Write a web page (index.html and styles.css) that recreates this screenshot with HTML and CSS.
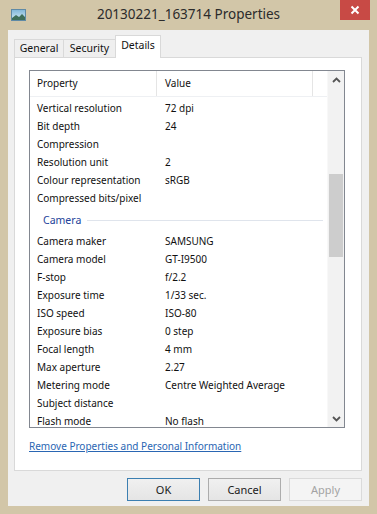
FILE: index.html
```html
<!DOCTYPE html>
<html lang="en">
<head>
    <meta charset="UTF-8">
    <title>20130221_163714 Properties</title>
    <link rel="stylesheet" href="styles.css">
</head>
<body>

<div class="window">
    <div class="titlebar">
        <svg class="titlebar__icon" width="15" height="12" viewBox="0 0 15 12">
            <defs>
                <linearGradient id="sky" x1="0" y1="0" x2="0" y2="1">
                    <stop offset="0" stop-color="#7fb6d8"/>
                    <stop offset="1" stop-color="#d7ecf6"/>
                </linearGradient>
            </defs>
            <rect x="0.5" y="0.5" width="14" height="11" fill="url(#sky)" stroke="#5f8aa6"/>
            <path d="M1 9 L5 6 L8 8 L11 5 L14 8 L14 11 L1 11 Z" fill="#3f6f5a"/>
        </svg>
        <div class="titlebar__text">20130221_163714 Properties</div>
        <div class="titlebar__close">
            <svg width="10" height="10" viewBox="0 0 10 10"><path d="M1.5 1.5 L8.5 8.5 M8.5 1.5 L1.5 8.5" stroke="#fff" stroke-width="2"/></svg>
        </div>
    </div>

    <div class="client">
        <div class="tabs">
            <div class="tab tab--general">General</div>
            <div class="tab tab--security">Security</div>
            <div class="tab tab--active">Details</div>
        </div>

        <div class="panel">
            <div class="list">
                <div class="list__main">
                    <div class="list__head">
                        <div class="cell cell--prop">Property</div>
                        <div class="cell cell--value">Value</div>
                        <div class="cell cell--rest"></div>
                    </div>
                    <div class="list__body">
                        <div class="row"><div class="cell cell--prop">Vertical resolution</div><div class="cell cell--value">72 dpi</div></div>
                        <div class="row"><div class="cell cell--prop">Bit depth</div><div class="cell cell--value">24</div></div>
                        <div class="row"><div class="cell cell--prop">Compression</div><div class="cell cell--value"></div></div>
                        <div class="row"><div class="cell cell--prop">Resolution unit</div><div class="cell cell--value">2</div></div>
                        <div class="row"><div class="cell cell--prop">Colour representation</div><div class="cell cell--value">sRGB</div></div>
                        <div class="row"><div class="cell cell--prop">Compressed bits/pixel</div><div class="cell cell--value"></div></div>
                        <div class="group"><span class="group__name">Camera</span><span class="group__line"></span></div>
                        <div class="row"><div class="cell cell--prop">Camera maker</div><div class="cell cell--value">SAMSUNG</div></div>
                        <div class="row"><div class="cell cell--prop">Camera model</div><div class="cell cell--value">GT-I9500</div></div>
                        <div class="row"><div class="cell cell--prop">F-stop</div><div class="cell cell--value">f/2.2</div></div>
                        <div class="row"><div class="cell cell--prop">Exposure time</div><div class="cell cell--value">1/33 sec.</div></div>
                        <div class="row"><div class="cell cell--prop">ISO speed</div><div class="cell cell--value">ISO-80</div></div>
                        <div class="row"><div class="cell cell--prop">Exposure bias</div><div class="cell cell--value">0 step</div></div>
                        <div class="row"><div class="cell cell--prop">Focal length</div><div class="cell cell--value">4 mm</div></div>
                        <div class="row"><div class="cell cell--prop">Max aperture</div><div class="cell cell--value">2.27</div></div>
                        <div class="row"><div class="cell cell--prop">Metering mode</div><div class="cell cell--value">Centre Weighted Average</div></div>
                        <div class="row"><div class="cell cell--prop">Subject distance</div><div class="cell cell--value"></div></div>
                        <div class="row"><div class="cell cell--prop">Flash mode</div><div class="cell cell--value">No flash</div></div>
                    </div>
                </div>
                <div class="scrollbar">
                    <div class="scrollbar__btn">
                        <svg width="9" height="6" viewBox="0 0 9 6"><polyline points="1,5 4.5,1.5 8,5" fill="none" stroke="#555" stroke-width="1.8"/></svg>
                    </div>
                    <div class="scrollbar__track"><div class="scrollbar__thumb"></div></div>
                    <div class="scrollbar__btn">
                        <svg width="9" height="6" viewBox="0 0 9 6"><polyline points="1,1 4.5,4.5 8,1" fill="none" stroke="#555" stroke-width="1.8"/></svg>
                    </div>
                </div>
            </div>
            <a class="remove-link" href="#">Remove Properties and Personal Information</a>
        </div>

        <div class="buttons">
            <button class="btn btn--default">OK</button>
            <button class="btn">Cancel</button>
            <button class="btn btn--disabled">Apply</button>
        </div>
    </div>
</div>

</body>
</html>
```

FILE: styles.css
```css
*{
    box-sizing: border-box;
    margin:0;
    padding:0;
}
body{
    background:#d2c6a8;
    font-family:"Noto Sans", "Open Sans", sans-serif;
    font-size:10px;
    color:#111;
}
.window{
    width:377px;
    height:514px;
    padding:0 8px 8px 8px;
    display:flex;
    flex-direction:column;
}

/* title bar */
.titlebar{
    height:30px;
    display:grid;
    grid-template-columns:1fr auto 1fr;
    align-items:start;
}
.titlebar__icon{
    margin-top:9px;
    margin-left:3px;
}
.titlebar__text{
    font-size:13.5px;
    color:#2b2b2b;
    padding-top:5px;
}
.titlebar__close{
    justify-self:end;
    width:30px;
    height:20px;
    margin-right:-1px;
    background:#c84a45;
    display:flex;
    align-items:center;
    justify-content:center;
}

/* client area */
.client{
    flex:1;
    background:#f0f0f0;
    padding:5px 7px 0 6px;
    display:flex;
    flex-direction:column;
}
.tabs{
    height:22px;
    display:flex;
    align-items:flex-end;
}
.tab{
    height:18px;
    border:1px solid #d9d9d9;
    border-bottom:none;
    background:#efefef;
    line-height:17px;
    font-size:10.5px;
    text-align:center;
}
.tab + .tab{
    margin-left:-1px;
}
.tab--general{
    width:50px;
}
.tab--security{
    width:53px;
}
.tab--active{
    width:46px;
    height:23px;
    margin-bottom:-1px;
    background:#fff;
    position:relative;
    z-index:1;
    line-height:19px;
}
.panel{
    width:348px;
    height:414px;
    background:#fff;
    border:1px solid #d9d9d9;
    padding:12px 0 0 14px;
}

/* list view */
.list{
    width:316px;
    height:358px;
    border:1px solid #828790;
    display:flex;
    overflow:hidden;
}
.list__main{
    flex:1;
    overflow:hidden;
}
.list__head{
    height:26px;
    display:flex;
    border-bottom:1px solid #eef0f3;
}
.list__head .cell{
    line-height:25px;
    border-right:1px solid #e5e5e5;
}
.list__head .cell--value{
    width:156px;
}
.list__head .cell--rest{
    flex:1;
    border-right:none;
}
.list__body{
    padding-top:2px;
}
.row{
    height:18px;
    display:flex;
    line-height:18px;
}
.cell{
    white-space:nowrap;
}
.cell--prop{
    width:127px;
    padding-left:7px;
}
.cell--value{
    padding-left:8px;
}
.group{
    height:25px;
    display:flex;
    align-items:center;
    padding-left:13px;
    padding-right:4px;
}
.group__name{
    color:#23439a;
    font-size:10.5px;
}
.group__line{
    flex:1;
    height:1px;
    margin-left:6px;
    margin-top:2px;
    background:#dfe4ec;
}

/* scroll bar */
.scrollbar{
    width:17px;
    background:#f2f2f2;
    border-left:1px solid #f8f8f8;
    display:flex;
    flex-direction:column;
}
.scrollbar__btn{
    height:17px;
    display:flex;
    align-items:center;
    justify-content:center;
}
.scrollbar__track{
    flex:1;
}
.scrollbar__thumb{
    height:83px;
    margin:86px 1px 0 1px;
    background:#cdcdcd;
}

.remove-link{
    display:inline-block;
    margin-top:11px;
    color:#2a66b3;
    font-size:10px;
    line-height:14px;
}

/* buttons */
.buttons{
    display:flex;
    justify-content:flex-end;
    gap:8px;
    margin-top:7px;
}
.btn{
    width:73px;
    height:23px;
    font-family:"Noto Sans", "Open Sans", sans-serif;
    font-size:11px;
    color:#1a1a1a;
    border:1px solid #acacac;
    background:linear-gradient(#f0f0f0, #e5e5e5);
}
.btn--default{
    border-color:#3c7fb1;
}
.btn--disabled{
    color:#a3a3a3;
    border-color:#dadada;
    background:#f4f4f4;
}
```
